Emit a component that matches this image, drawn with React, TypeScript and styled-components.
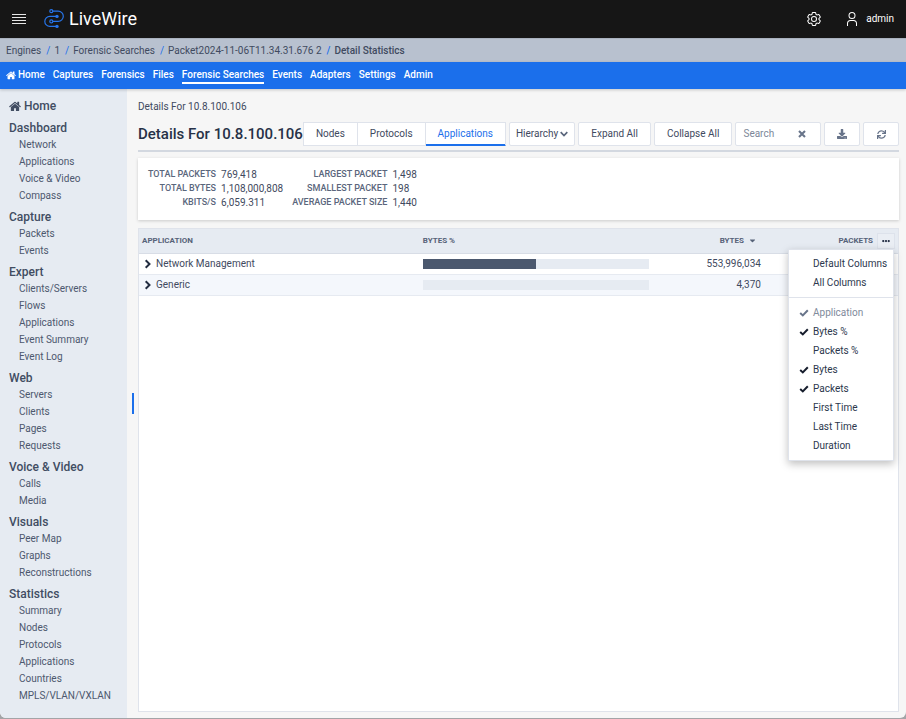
import React from "react";
import styled, { createGlobalStyle, css } from "styled-components";
import { FaDownload, FaSync, FaCaretDown, FaEllipsisH } from "react-icons/fa";

const GlobalStyle = createGlobalStyle`
  * { box-sizing: border-box; }
  body {
    margin: 0;
    background: #a3a4a7;
    font-family: Roboto, "Liberation Sans", sans-serif;
    font-size: 10px;
    line-height: 14px;
    color: #3f4a60;
  }
  button, input { font: inherit; color: inherit; }
  a { color: inherit; text-decoration: none; }
  h1, h2, ul, ol, dl, dd { margin: 0; padding: 0; }
  ul, ol { list-style: none; }
  svg { display: block; flex: none; }
`;

const Page = styled.div`
  display: flex;
  flex-direction: column;
  min-height: calc(100vh - 1px);
  background: #f6f6f6;
  border-radius: 0 0 6px 6px;
  overflow: hidden;
`;

const TopBar = styled.header`
  display: flex;
  align-items: center;
  height: 38px;
  padding: 0 12px;
  background: #161616;
  color: #fff;
`;

const BareButton = styled.button`
  display: flex;
  align-items: center;
  gap: 6px;
  padding: 0;
  border: 0;
  background: none;
  color: inherit;
  cursor: pointer;
`;

const Brand = styled.a`
  display: flex;
  align-items: center;
  gap: 4px;
  margin-left: 18px;
  font-size: 18px;
  line-height: 20px;
`;

const TopActions = styled.div`
  display: flex;
  gap: 22px;
  margin-left: auto;
`;

const Crumbs = styled.ol`
  display: flex;
  align-items: center;
  height: 24px;
  padding: 0 6px;
  background: #b8c1cf;
  border-top: 1px solid #a9b1be;
`;

const Crumb = styled.li`
  & + &::before {
    content: "/";
    margin: 0 4px 0 5px;
    color: #1b6feb;
  }
  &:last-child { font-weight: 500; }
`;

const NavBar = styled.nav`
  display: flex;
  align-items: center;
  gap: 8px;
  height: 27px;
  padding: 0 6px 1px;
  background: #1b6feb;
  color: #fff;
  font-weight: 500;
  box-shadow: 0 1px 3px rgba(0, 0, 0, 0.2);
  z-index: 1;
`;

const NavLink = styled.a<{ $active?: boolean }>`
  display: flex;
  align-items: center;
  gap: 2px;
  height: 18px;
  border-top: 2px solid transparent;
  border-bottom: 2px solid ${(p) => (p.$active ? "#fff" : "transparent")};
`;

const Body = styled.div`
  display: flex;
  flex: 1;
`;

const Sidebar = styled.aside`
  flex: 0 0 127px;
  padding: 8px 9px 12px;
  background: #e6ebf2;
`;

const SideHeading = styled.h2`
  display: flex;
  align-items: center;
  gap: 3px;
  height: 17px;
  margin-top: 4px;
  font-size: 12px;
  font-weight: 500;
  color: #414d62;
  &:first-child { margin: 0 0 5px; }
`;

const SideLink = styled.a`
  display: block;
  padding-left: 10px;
  line-height: 17px;
  color: #4d586e;
`;

const Splitter = styled.div`
  display: flex;
  align-items: center;
  justify-content: center;
  flex: 0 0 11px;
`;

const Grip = styled.div`
  width: 2px;
  height: 21px;
  background: #1b6feb;
`;

const Main = styled.main`
  display: flex;
  flex: 1;
  flex-direction: column;
  min-width: 0;
  padding: 11px 7px 6px 0;
`;

const Toolbar = styled.div`
  display: flex;
  align-items: center;
  gap: 3px;
  margin-top: 8px;
  padding-bottom: 4px;
  border-bottom: 2px solid #d3d8e0;
`;

const Title = styled.h1`
  flex: 1 0 auto;
  margin-right: -3px;
  font-size: 15px;
  line-height: 20px;
  font-weight: 500;
  color: #263147;
  white-space: nowrap;
`;

const control = css`
  height: 24px;
  border: 1px solid #dfe3eb;
  border-radius: 2px;
  background: #fff;
`;

const ToolButton = styled.button<{ $pad?: number }>`
  ${control}
  display: flex;
  align-items: center;
  gap: 2px;
  padding: 0 ${(p) => p.$pad ?? 12}px;
  white-space: nowrap;
  cursor: pointer;
`;

const IconButton = styled(ToolButton)`
  justify-content: center;
  width: 36px;
  padding: 0;
  color: #68748a;
`;

const TabGroup = styled.div`
  display: flex;
`;

const Tab = styled(ToolButton)<{ $active?: boolean }>`
  border-radius: 0;
  & + & { border-left-width: 0; }
  ${(p) => p.$active && css`
    color: #1b6feb;
    box-shadow: inset 0 -1px #1b6feb;
    border-bottom-color: #1b6feb;
  `}
`;

const SearchField = styled.div`
  ${control}
  display: flex;
  align-items: center;
  flex: 0 1 86px;
  min-width: 60px;
  padding: 0 14px 0 7px;
  color: #68748a;
`;

const SearchInput = styled.input`
  flex: 1;
  min-width: 0;
  padding: 0;
  border: 0;
  outline: 0;
  background: none;
  &::placeholder { color: #7d8798; opacity: 1; }
`;

const Summary = styled.section`
  display: flex;
  gap: 9px;
  margin-top: 6px;
  padding: 9px 10px 11px;
  background: #fff;
  box-shadow: 0 1px 3px rgba(0, 0, 0, 0.18);
`;

const Facts = styled.dl`
  display: grid;
  grid-template-columns: auto auto;
  grid-auto-rows: 14px;
  column-gap: 5px;
  line-height: 15px;
`;

const FactName = styled.dt`
  font-size: 9px;
  font-weight: 500;
  text-align: right;
  color: #5a667c;
`;

const TablePanel = styled.section`
  flex: 1;
  margin-top: 8px;
  border: 1px solid #dfe3eb;
  background: #fff;
`;

const Table = styled.table`
  width: 100%;
  border-collapse: collapse;
  table-layout: fixed;
`;

const Head = styled.th<{ $width: string; $right?: boolean; $inset?: number }>`
  position: relative;
  width: ${(p) => p.$width};
  height: 24px;
  padding: 0 ${(p) => p.$inset ?? 3}px 0 3px;
  border-bottom: 1px solid #d8dde6;
  background: #e6ebf2;
  font-size: 8px;
  line-height: 12px;
  font-weight: 700;
  color: #566278;
  text-align: ${(p) => (p.$right ? "right" : "left")};
`;

const HeadEnd = styled.div`
  display: flex;
  align-items: center;
  justify-content: flex-end;
  gap: 4px;
`;

const MoreButton = styled.button`
  display: flex;
  align-items: center;
  justify-content: center;
  width: 18px;
  height: 16px;
  padding: 0;
  border: 1px solid #dde2eb;
  background: #eaeef4;
  color: #263147;
`;

const Row = styled.tr`
  height: 21px;
  border-bottom: 1px solid #e6eaf1;
  &:nth-child(even) { background: #f4f7fc; }
`;

const Cell = styled.td<{ $right?: boolean }>`
  padding: 0 ${(p) => (p.$right ? 8 : 3)}px 0 3px;
  text-align: ${(p) => (p.$right ? "right" : "left")};
`;

const ExpandButton = styled(BareButton)`
  gap: 4px;
  padding-left: 2px;
  & > svg { color: #222c40; }
`;

const Track = styled.div`
  height: 10px;
  margin-right: 3px;
  background: #e6ebf2;
`;

const Fill = styled.div`
  height: 100%;
  background: #4b586e;
`;

const Menu = styled.div`
  position: absolute;
  top: 20px;
  right: 4px;
  z-index: 2;
  width: 106px;
  padding: 4px 0 5px;
  border: 1px solid #dfe3eb;
  background: #fff;
  box-shadow: 0 3px 8px rgba(0, 0, 0, 0.25);
  font-size: 10px;
  font-weight: 400;
  color: #2c374d;
  text-align: left;
`;

const MenuButton = styled.button`
  display: block;
  width: 100%;
  height: 19px;
  padding: 0 0 0 24px;
  border: 0;
  background: none;
  text-align: left;
  white-space: nowrap;
`;

const MenuRule = styled.hr`
  height: 1px;
  margin: 5px 0;
  border: 0;
  background: #dfe3eb;
`;

const MenuOption = styled.label<{ $disabled?: boolean }>`
  display: grid;
  grid-template-columns: 10px 1fr;
  column-gap: 4px;
  align-items: center;
  height: 19px;
  padding-left: 10px;
  color: ${(p) => (p.$disabled ? "#808a9b" : "inherit")};
  & > svg { grid-area: 1 / 1; visibility: hidden; color: ${(p) => (p.$disabled ? "#68748a" : "#161d2c")}; }
  & > input:checked + svg { visibility: visible; }
`;

const HiddenCheck = styled.input`
  grid-area: 1 / 1;
  width: 10px;
  height: 10px;
  margin: 0;
  appearance: none;
`;

const HomeIcon = ({ size }: { size: number }) => (
  <svg width={size} height={size} viewBox="0 64 1664 1536" fill="currentColor" aria-hidden>
    <path d="M1408 992v480q0 26-19 45t-45 19h-384v-384h-256v384h-384q-26 0-45-19t-19-45v-480q0-1 .5-3t.5-3l575-474 575 474q1 2 1 6zm223-69l-62 74q-8 9-21 11h-3q-13 0-21-7l-692-577-692 577q-12 8-24 7-13-2-21-11l-62-74q-8-10-7-23.5t11-21.5l719-599q32-26 76-26t76 26l244 204v-195q0-14 9-23t23-9h192q14 0 23 9t9 23v408l219 182q10 8 11 21.5t-7 23.5z" />
  </svg>
);

const ChevronDown = () => (
  <svg width="8" height="6" viewBox="0 0 8 6" fill="none" stroke="#5a667c" strokeWidth="1.7" aria-hidden>
    <path d="M.7 1.2 4 4.5 7.3 1.2" />
  </svg>
);

const ChevronRight = () => (
  <svg width="8" height="10" viewBox="0 0 8 10" fill="none" stroke="currentColor" strokeWidth="2" aria-hidden>
    <path d="M1.7 1.2 5.5 5 1.7 8.8" />
  </svg>
);

const CrossIcon = () => (
  <svg width="8" height="8" viewBox="0 0 8 8" fill="none" stroke="currentColor" strokeWidth="2.1" aria-hidden>
    <path d="M1 1l6 6M7 1l-6 6" />
  </svg>
);

const CheckIcon = () => (
  <svg width="10" height="8" viewBox="0 0 10 8" fill="none" stroke="currentColor" strokeWidth="2" aria-hidden>
    <path d="M1.2 4 3.8 6.4 8.8 1.3" />
  </svg>
);

const MenuIcon = () => (
  <svg width="14" height="12" viewBox="0 0 14 12" stroke="#e6e6e6" strokeWidth="1" aria-hidden>
    <path d="M0 1.5h14M0 4.5h14M0 7.5h14M0 10.5h14" />
  </svg>
);

const LogoIcon = () => (
  <svg width="21" height="20" viewBox="0 0 21 20" fill="none" stroke="#2775ea" strokeWidth="1.2" aria-hidden>
    <path d="M9 2.2h5.2a5.1 5.1 0 0 1 0 10.2H9M12 7.4H5.8a5 5 0 0 0 0 10H12" />
    <circle cx="7.3" cy="2.2" r="1.5" />
    <circle cx="7.3" cy="12.4" r="1.5" />
    <circle cx="13" cy="7.4" r="1.7" fill="#2775ea" stroke="none" />
    <circle cx="13" cy="17.4" r="1.7" fill="#2775ea" stroke="none" />
  </svg>
);

const GearIcon = () => (
  <svg width="16" height="16" viewBox="0 0 32 32" fill="#fff" aria-hidden>
    <path d="M27,16.76c0-.25,0-.5,0-.76s0-.51,0-.77l1.92-1.68A2,2,0,0,0,29.3,11L26.94,7a2,2,0,0,0-1.73-1,2,2,0,0,0-.64.1l-2.43.82a11.35,11.35,0,0,0-1.31-.75l-.51-2.52a2,2,0,0,0-2-1.61H13.64a2,2,0,0,0-2,1.61l-.51,2.52a11.48,11.48,0,0,0-1.32.75L7.43,6.06A2,2,0,0,0,6.79,6,2,2,0,0,0,5.06,7L2.7,11a2,2,0,0,0,.41,2.51L5,15.24c0,.25,0,.5,0,.76s0,.51,0,.77L3.11,18.45A2,2,0,0,0,2.7,21L5.06,25a2,2,0,0,0,1.73,1,2,2,0,0,0,.64-.1l2.43-.82a11.35,11.35,0,0,0,1.31.75l.51,2.52a2,2,0,0,0,2,1.61h4.72a2,2,0,0,0,2-1.61l.51-2.52a11.48,11.48,0,0,0,1.32-.75l2.42.82a2,2,0,0,0,.64.1,2,2,0,0,0,1.73-1L29.3,21a2,2,0,0,0-.41-2.51ZM25.21,24l-3.43-1.16a8.86,8.86,0,0,1-2.71,1.57L18.36,28H13.64l-.71-3.55a9.36,9.36,0,0,1-2.7-1.57L6.79,24,4.43,20l2.72-2.4a8.9,8.9,0,0,1,0-3.13L4.43,12,6.79,8l3.43,1.16a8.86,8.86,0,0,1,2.71-1.57L13.64,4h4.72l.71,3.55a9.36,9.36,0,0,1,2.7,1.57L25.21,8,27.57,12l-2.72,2.4a8.9,8.9,0,0,1,0,3.13L27.57,20Z" />
    <path d="M16,22a6,6,0,1,1,6-6A5.94,5.94,0,0,1,16,22Zm0-10a3.91,3.91,0,0,0-4,4,3.91,3.91,0,0,0,4,4,3.91,3.91,0,0,0,4-4A3.91,3.91,0,0,0,16,12Z" />
  </svg>
);

const UserIcon = () => (
  <svg width="16" height="16" viewBox="0 0 32 32" fill="#fff" aria-hidden>
    <path d="M16 4a5 5 0 1 1-5 5 5 5 0 0 1 5-5m0-2a7 7 0 1 0 7 7A7 7 0 0 0 16 2zM26 30H24V25a5 5 0 0 0-5-5H13a5 5 0 0 0-5 5v5H6V25a7 7 0 0 1 7-7h6a7 7 0 0 1 7 7z" />
  </svg>
);

const crumbs = ["Engines", "1", "Forensic Searches", "Packet2024-11-06T11.34.31.676 2", "Detail Statistics"];
const navItems = ["Home", "Captures", "Forensics", "Files", "Forensic Searches", "Events", "Adapters", "Settings", "Admin"];

const sideGroups = [
  { title: "Dashboard", items: ["Network", "Applications", "Voice & Video", "Compass"] },
  { title: "Capture", items: ["Packets", "Events"] },
  { title: "Expert", items: ["Clients/Servers", "Flows", "Applications", "Event Summary", "Event Log"] },
  { title: "Web", items: ["Servers", "Clients", "Pages", "Requests"] },
  { title: "Voice & Video", items: ["Calls", "Media"] },
  { title: "Visuals", items: ["Peer Map", "Graphs", "Reconstructions"] },
  { title: "Statistics", items: ["Summary", "Nodes", "Protocols", "Applications", "Countries", "MPLS/VLAN/VXLAN"] },
];

const facts = [
  [["TOTAL PACKETS", "769,418"], ["TOTAL BYTES", "1,108,000,808"], ["KBITS/S", "6,059.311"]],
  [["LARGEST PACKET", "1,498"], ["SMALLEST PACKET", "198"], ["AVERAGE PACKET SIZE", "1,440"]],
];

const rows = [
  { name: "Network Management", percent: 50, bytes: "553,996,034" },
  { name: "Generic", percent: 0, bytes: "4,370" },
];

const columns = [
  { name: "Application", on: true, disabled: true },
  { name: "Bytes %", on: true },
  { name: "Packets %", on: false },
  { name: "Bytes", on: true },
  { name: "Packets", on: true },
  { name: "First Time", on: false },
  { name: "Last Time", on: false },
  { name: "Duration", on: false },
];

export default function App() {
  return (
    <Page>
      <GlobalStyle />
      <TopBar>
        <BareButton aria-label="Menu"><MenuIcon /></BareButton>
        <Brand href="#"><LogoIcon />LiveWire</Brand>
        <TopActions>
          <BareButton aria-label="Settings"><GearIcon /></BareButton>
          <BareButton><UserIcon />admin</BareButton>
        </TopActions>
      </TopBar>
      <Crumbs>
        {crumbs.map((c, i) => (
          <Crumb key={c}>{i < crumbs.length - 1 ? <a href="#">{c}</a> : c}</Crumb>
        ))}
      </Crumbs>
      <NavBar>
        {navItems.map((n) => (
          <NavLink key={n} href="#" $active={n === "Forensic Searches"}>
            {n === "Home" && <HomeIcon size={10} />}
            {n}
          </NavLink>
        ))}
      </NavBar>
      <Body>
        <Sidebar>
          <SideHeading><HomeIcon size={12} /><a href="#">Home</a></SideHeading>
          {sideGroups.map((g) => (
            <React.Fragment key={g.title}>
              <SideHeading>{g.title}</SideHeading>
              <ul>
                {g.items.map((item) => (
                  <li key={item}><SideLink href="#">{item}</SideLink></li>
                ))}
              </ul>
            </React.Fragment>
          ))}
        </Sidebar>
        <Splitter><Grip /></Splitter>
        <Main>
          <div>Details For 10.8.100.106</div>
          <Toolbar>
            <Title>Details For 10.8.100.106</Title>
            <TabGroup>
              <Tab>Nodes</Tab>
              <Tab>Protocols</Tab>
              <Tab $active>Applications</Tab>
            </TabGroup>
            <ToolButton $pad={6}>Hierarchy<ChevronDown /></ToolButton>
            <ToolButton>Expand All</ToolButton>
            <ToolButton>Collapse All</ToolButton>
            <SearchField>
              <SearchInput placeholder="Search" aria-label="Search" />
              <BareButton aria-label="Clear search"><CrossIcon /></BareButton>
            </SearchField>
            <IconButton aria-label="Download"><FaDownload size={10} /></IconButton>
            <IconButton aria-label="Refresh"><FaSync size={9} /></IconButton>
          </Toolbar>
          <Summary>
            {facts.map((group, i) => (
              <Facts key={i}>
                {group.map(([name, value]) => (
                  <React.Fragment key={name}>
                    <FactName>{name}</FactName>
                    <dd>{value}</dd>
                  </React.Fragment>
                ))}
              </Facts>
            ))}
          </Summary>
          <TablePanel>
            <Table>
              <thead>
                <tr>
                  <Head $width="37%">APPLICATION</Head>
                  <Head $width="31%">BYTES %</Head>
                  <Head $width="15%" $right $inset={12}>
                    <HeadEnd>BYTES<FaCaretDown size={9} /></HeadEnd>
                  </Head>
                  <Head $width="17%" $right>
                    <HeadEnd>
                      PACKETS
                      <MoreButton aria-label="Choose columns"><FaEllipsisH size={8} /></MoreButton>
                    </HeadEnd>
                    <Menu>
                      <MenuButton>Default Columns</MenuButton>
                      <MenuButton>All Columns</MenuButton>
                      <MenuRule />
                      {columns.map((c) => (
                        <MenuOption key={c.name} $disabled={c.disabled}>
                          <HiddenCheck type="checkbox" defaultChecked={c.on} disabled={c.disabled} />
                          <CheckIcon />
                          <span>{c.name}</span>
                        </MenuOption>
                      ))}
                    </Menu>
                  </Head>
                </tr>
              </thead>
              <tbody>
                {rows.map((r) => (
                  <Row key={r.name}>
                    <Cell><ExpandButton><ChevronRight />{r.name}</ExpandButton></Cell>
                    <Cell><Track><Fill style={{ width: `${r.percent}%` }} /></Track></Cell>
                    <Cell $right>{r.bytes}</Cell>
                    <Cell />
                  </Row>
                ))}
              </tbody>
            </Table>
          </TablePanel>
        </Main>
      </Body>
    </Page>
  );
}
